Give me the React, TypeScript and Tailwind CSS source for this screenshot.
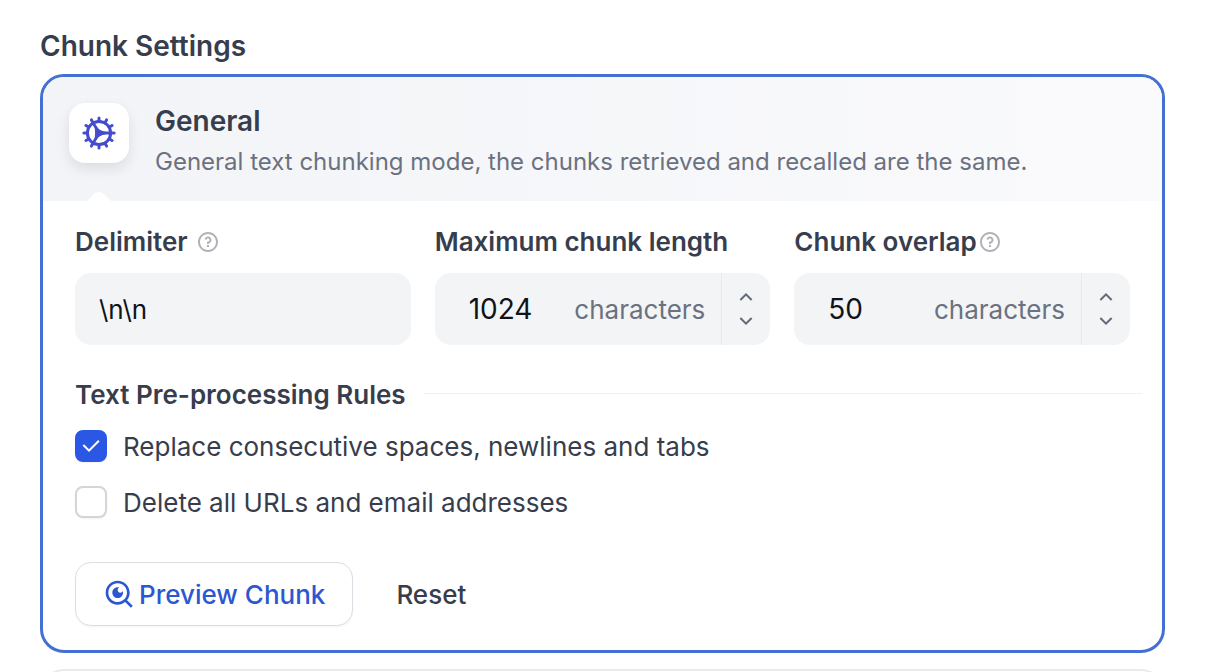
import React, { useState } from 'react';
import {
  RiArrowDownSLine,
  RiArrowUpSLine,
  RiCheckLine,
  RiQuestionLine,
  RiSearchEyeLine,
} from 'react-icons/ri';

const DEFAULTS = {
  delimiter: '\\n\\n',
  maxLength: '1024',
  overlap: '50',
  replaceSpaces: true,
  deleteUrls: false,
};

const TEETH = [0, 30, 60, 90, 120, 150, 180, 210, 240, 270, 300, 330];

const GearIcon = () => (
  <svg viewBox="-17 -17 34 34" className="size-[34px] text-[#444ccc]" stroke="currentColor" fill="none" aria-hidden="true">
    <circle r="11.6" strokeWidth="3" />
    {TEETH.map((angle) => (
      <path key={angle} d="M0-12.5V-15.1" strokeWidth="3" strokeLinecap="round" transform={`rotate(${angle})`} />
    ))}
    <path d="M0 0H11.8M0 0L-5.9-10.2M0 0L-5.9 10.2" strokeWidth="2.8" />
    <path d="M6 0Q0 1-3 5.2Q-2.4 0-3-5.2Q0-1 6 0Z" fill="currentColor" strokeWidth="2.4" strokeLinejoin="round" />
  </svg>
);

interface FieldLabelProps {
  htmlFor: string;
  text: string;
  children?: React.ReactNode;
}

const FieldLabel: React.FC<FieldLabelProps> = ({ htmlFor, text, children }) => (
  <div className="flex h-8 items-center">
    <label htmlFor={htmlFor} className="whitespace-nowrap text-[26px] leading-8 font-semibold text-[#373d4c]">
      {text}
    </label>
    {children}
  </div>
);

interface NumberFieldProps {
  id: string;
  value: string;
  onChange: (value: string) => void;
}

const NumberField: React.FC<NumberFieldProps> = ({ id, value, onChange }) => {
  const step = (delta: number) => onChange(String(Math.max(0, (parseInt(value, 10) || 0) + delta)));

  return (
    <div className="mt-[15px] flex h-[72px] overflow-hidden rounded-2xl bg-[#f2f4f6]">
      <input
        id={id}
        type="text"
        inputMode="numeric"
        value={value}
        onChange={(e) => onChange(e.target.value)}
        className="w-0 min-w-0 flex-1 bg-transparent pl-[34px] text-[28px] text-[#101318] outline-none"
      />
      <span className="flex items-center pr-4 text-[26px] text-[#6b7180]">characters</span>
      <div className="flex w-[49px] flex-col items-center justify-center border-l border-[#e7e9ed] text-[#646a78]">
        <button type="button" aria-label="Increase" onClick={() => step(1)}>
          <RiArrowUpSLine className="size-6" />
        </button>
        <button type="button" aria-label="Decrease" onClick={() => step(-1)}>
          <RiArrowDownSLine className="size-6" />
        </button>
      </div>
    </div>
  );
};

interface RuleProps {
  label: string;
  checked: boolean;
  onChange: (checked: boolean) => void;
}

const Rule: React.FC<RuleProps> = ({ label, checked, onChange }) => (
  <label className="flex h-8 items-center gap-4 text-[26px] text-[#373d4c]">
    <span className="relative size-8 shrink-0">
      <input
        type="checkbox"
        checked={checked}
        onChange={(e) => onChange(e.target.checked)}
        className="block size-8 appearance-none rounded-lg border-2 border-[#d3d5da] bg-white shadow-xs checked:border-[#2a57e3] checked:bg-[#2a57e3]"
      />
      {checked && <RiCheckLine className="pointer-events-none absolute inset-1 size-6 text-white" />}
    </span>
    {label}
  </label>
);

const App: React.FC = () => {
  const [settings, setSettings] = useState(DEFAULTS);

  const update = (patch: Partial<typeof DEFAULTS>) => setSettings({ ...settings, ...patch });

  return (
    <main className="h-screen overflow-hidden bg-white pt-7 pr-[49px] pl-10 font-['Inter',sans-serif]">
      <h1 className="text-[28px] leading-9 font-semibold text-[#373d4c]">Chunk Settings</h1>

      <section className="mt-[10px] overflow-hidden rounded-3xl border-3 border-[#4370d2] bg-white">
        <header className="relative flex h-[124px] gap-[26px] bg-linear-to-r from-[#f2f4f7] to-[#fafafc] px-[26px] pt-[26px]">
          <div className="flex size-[60px] items-center justify-center rounded-2xl bg-white shadow-[0_6px_14px_rgba(16,24,40,0.1)]">
            <GearIcon />
          </div>
          <div>
            <h2 className="text-[28px] leading-9 font-semibold text-[#373d4c]">General</h2>
            <p className="mt-[5px] text-2xl leading-9 text-[#6b7180]">
              General text chunking mode, the chunks retrieved and recalled are the same.
            </p>
          </div>
          <svg viewBox="0 0 24 10" className="absolute bottom-0 left-11 h-[10px] w-6 fill-white" aria-hidden="true">
            <path d="M0 10L7.5 2.6Q9 1 12 1T16.5 2.6L24 10Z" />
          </svg>
        </header>

        <div className="px-8 pt-[25px] pb-6">
          <div className="grid grid-cols-3 gap-6">
            <div>
              <FieldLabel htmlFor="delimiter" text="Delimiter">
                <RiQuestionLine className="ml-2 size-6 text-[#b0b2b8]" />
              </FieldLabel>
              <input
                id="delimiter"
                type="text"
                value={settings.delimiter}
                onChange={(e) => update({ delimiter: e.target.value })}
                className="mt-[15px] block h-[72px] w-full rounded-2xl bg-[#f2f4f6] px-6 text-[26px] text-[#101318] outline-none"
              />
            </div>
            <div>
              <FieldLabel htmlFor="max-length" text="Maximum chunk length" />
              <NumberField id="max-length" value={settings.maxLength} onChange={(maxLength) => update({ maxLength })} />
            </div>
            <div>
              <FieldLabel htmlFor="overlap" text="Chunk overlap">
                <RiQuestionLine className="ml-px size-6 text-[#b0b2b8]" />
              </FieldLabel>
              <NumberField id="overlap" value={settings.overlap} onChange={(overlap) => update({ overlap })} />
            </div>
          </div>

          <div className="mt-8 -mr-3 flex items-center gap-[18px]">
            <h3 className="text-[26px] leading-9 font-semibold text-[#373d4c]">Text Pre-processing Rules</h3>
            <div className="mb-1 h-px flex-1 bg-[#eff0f3]" />
          </div>

          <div className="mt-[17px] flex flex-col gap-6">
            <Rule
              label="Replace consecutive spaces, newlines and tabs"
              checked={settings.replaceSpaces}
              onChange={(replaceSpaces) => update({ replaceSpaces })}
            />
            <Rule
              label="Delete all URLs and email addresses"
              checked={settings.deleteUrls}
              onChange={(deleteUrls) => update({ deleteUrls })}
            />
          </div>

          <div className="mt-11 flex gap-4">
            <button
              type="button"
              className="flex h-16 items-center gap-1 rounded-2xl border border-[#dcdee3] bg-white px-[27px] text-[26px] font-medium text-[#2b58d0] shadow-xs"
            >
              <RiSearchEyeLine className="size-8" />
              Preview Chunk
            </button>
            <button
              type="button"
              onClick={() => setSettings(DEFAULTS)}
              className="h-16 px-[27px] text-[26px] font-medium text-[#373d4c]"
            >
              Reset
            </button>
          </div>
        </div>
      </section>

      <section className="mt-4 h-32 rounded-3xl border-2 border-[#e9eaed] bg-white" />
    </main>
  );
};

export default App;
